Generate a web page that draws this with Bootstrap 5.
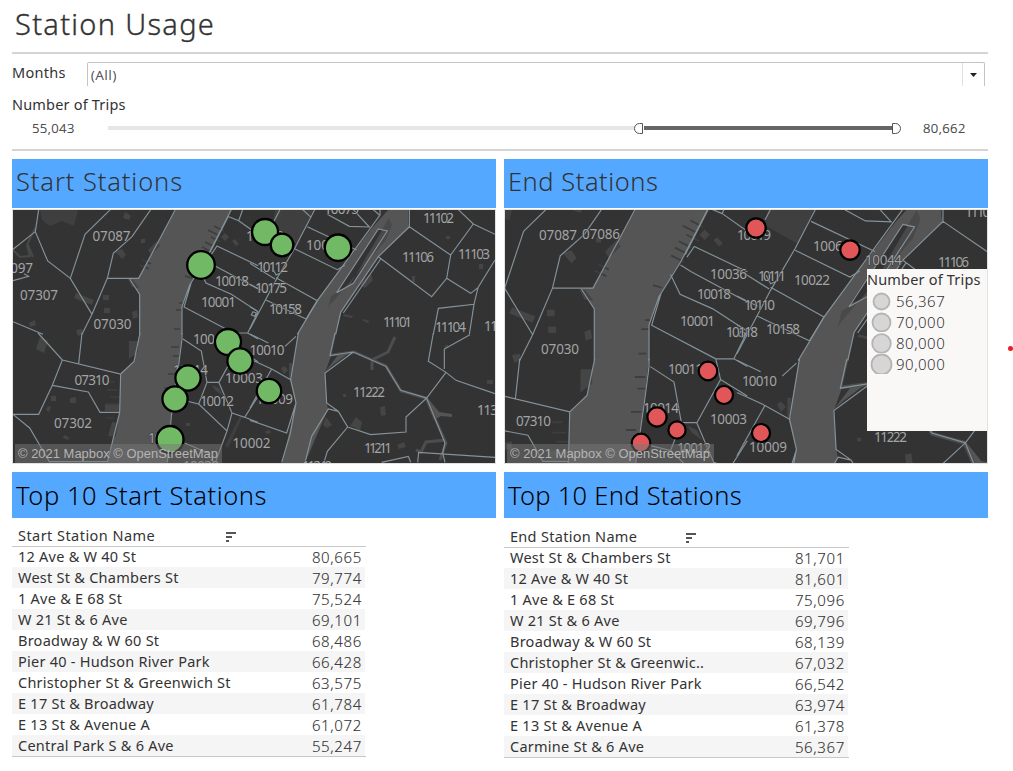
<!DOCTYPE html>
<html lang="en">
<head>
<meta charset="utf-8">
<title>Station Usage</title>
<link rel="stylesheet" href="https://cdn.jsdelivr.net/npm/bootstrap@5.3.0/dist/css/bootstrap.min.css">
<style>
body{font-family:"Noto Sans","Open Sans",sans-serif;color:#333;background:#fff;height:771px;overflow:hidden;font-size:14.5px}
.dash{width:976px;margin-left:12px;position:relative}
.title{height:52px;font-size:29px;font-weight:300;line-height:48px;padding-left:3px;letter-spacing:1.3px;-webkit-text-stroke:.35px #333}
.rule{height:2px;background:#d4d4d4}
.lbl{font-size:14.5px;line-height:20px;letter-spacing:.19px}
.months{height:34px;padding-top:8px}
.months .lbl{width:75px;letter-spacing:.3px}
.combo{width:898px;height:24px;border:1px solid #c4c4c4;border-bottom:0;border-radius:2px 2px 0 0;font-size:13.5px;font-weight:350;letter-spacing:.8px;-webkit-text-stroke:.2px #333}
.combo .arrow{width:22px;border-left:1px solid #e0e0e0}
.lite{font-weight:300;font-size:13px;letter-spacing:.45px;-webkit-text-stroke:.2px #333}
.lite span{position:relative;top:1px}
.lite .low{width:73px}
.banner{background:#55a8ff;height:49px;font-size:25.5px;font-weight:300;line-height:44px;padding-left:4px;letter-spacing:.88px}
.banner.end{letter-spacing:.52px}
.banner.top10{height:46px;color:#000;line-height:47px;letter-spacing:.57px}
.banner.top10.end{letter-spacing:.27px}
.mapbox{height:255px;margin-top:1px;margin-bottom:8px;border:1px solid #e2e2e2}
.mapbox svg{display:block}
.half{width:484px}
.legend{position:absolute;left:363px;top:110px;width:120px;height:162px;background:#f9f8f7}
.keyrow{height:21px;font-weight:300;font-size:15px;letter-spacing:.5px}
.keyrow span{padding-top:2px}
.rank{font-size:14.5px;line-height:21px;letter-spacing:.25px}
.rank .head{height:29px;border-bottom:1px solid #c8c8c8;padding-left:6px;line-height:35px}
.rank .item{height:21px;padding:0 4px 0 6px;line-height:21px;margin-right:1px}
.rank .item:nth-child(2){margin-top:-1px}
.rank .item:nth-child(odd){background:#f5f5f5}
.rank .item .num{font-weight:300;font-size:15px;position:relative;top:1px;color:#333;letter-spacing:.65px;margin-right:-1px;-webkit-text-stroke:.1px #333}
.rank .last{border-bottom:1px solid #c8c8c8}
.reddot{position:absolute;left:995.500px;top:346px;width:5px;height:5px;background:#ed1c24;border-radius:50%}
.zip{font:13.5px "Noto Sans",sans-serif;fill:#a2a4a6;stroke:#333;stroke-width:1px;paint-order:stroke}
.attr{font:13.4px "Liberation Sans",Arial,sans-serif;fill:#b4b4b4}
.edge path{fill:none;stroke:#84929a;stroke-width:1.15px;vector-effect:non-scaling-stroke}
</style>
</head>
<body>
<svg width="0" height="0" class="position-absolute">
<defs>
<g id="geo">
 <path fill="#3f3f3f" d="M40 210H78L74 226L62 221L50 226L42 220ZM275 210H313L297 244L272 230Z"/>
 <g fill="none" stroke="#484848"><path stroke-width="2" d="M35 228L27 245L30 256L20 257L13 250M28 245L33 257"/></g>
 <g fill="#555">
  <path d="M176 210L138 278L130 279L139.5 294V335L134 361L120.5 374L119.5 412L107 463H167L171 416L178.500 363L182 333V307L191 282L211 250L231 210Z"/>
  <path d="M388 210L372 228L317 300L298 334L290 380L296 403L282 463H305L328 409L327 404L325 373L331 356L336 334L341 312L378 257L409 228L406 210Z"/>
  <path d="M426 396L439 412L452 414V417L441 416L434 420L429 408Z"/>
  <path d="M325 372L338 355L354 351L345 356L333 365ZM408 210V222L403 210Z"/>
 </g>
 <path fill="#333" d="M378 229L388 231L353 284L337 291Z"/>
 <path fill="#494949" d="M389 218L392 225L386 240L330 305L328 309L331 296L350 285Z"/>
 <g fill="none" stroke="#4d4d4d" stroke-width="3"><path d="M331 355L354 352L386 366L401 391L426 398L446 443L440 460M372 370V360L388 352L395 337"/><path d="M446 440L426 442L421 452L416 450"/></g>
 <!-- buildings and parks -->
 <g fill="#454545">
  <path d="M115 251L122 249L126 255L122 259ZM128 279L133 280L139 288L132 287ZM76 293L94 300L92 305L74 298ZM103 295h6v5h-6ZM104 308h6v5h-6ZM29 323l6-3 1 5-6 2ZM76 330l6-1 1 5-5 2ZM132 312l5-2 1 7-5 2ZM125 212l6 4-2 4-6-2ZM141 239h4v4h-4ZM148 250l9-9 3 5-9 9ZM225 233l4 4-4 4-4-4ZM40 337l8 4-4 12-8-4ZM129 341h9v11l-9 7ZM51 396h5v5h-5ZM70 398l6-1v6h-6ZM48 406l3 1-2 5-3-2ZM105 404h15v7h-15ZM112 422l6 1-2 14-8-1ZM64 435l5 2-1 3-5-2Z"/>
  <path d="M363 280l8-6 2 6-8 8-5-3ZM344 314l9 2-1 2-9-2ZM363 319l6 2-1 2-6-3ZM412 276h3v6h-3ZM446 236h4v3h-4ZM479 264h4v5h-4ZM343 394h3v3h-3ZM380 407l5-1 1 9-5 1ZM397 445l7-3 2 5-7 2ZM323 425l3-8 6 8-5 3ZM350 426l6-9 6 5-2 9-6-4ZM445 345h3v3h-3ZM487 380h6v4h-6ZM265 431l5-1 1 3-5 1ZM264 387l3-2-1 6-3-2ZM289 363h3v15h-3ZM212 385l7 3 4 8-8-6ZM186 423h4v3h-4ZM235 239l4 5-3 2-4-5ZM281 368l3-2 4 4-4 4Z"/>
  <path d="M225 446L240 416L242 418L228 448Z" fill="#3f3f3f"/>
 </g>
 <g stroke="#3e3e3e" stroke-width="1.4"><path d="M208 230l10 5M211 237l10 5M205 242l10 5M202 247l10 5M199 253l10 5M214 226l10 5M185 276l7 2M179 303h5M176 310h6M174 329h6M171 347h8M173 356h6M168 374h8M164 388h8M140 265l9 4M143 260l8 4"/><path d="M115 382h-8M118 390h-11M120 397h-10M114 418h-8M119 404h-14"/></g>
 <g class="edge">
  <g transform="translate(8 205) scale(.33333)">
   <path d="M92 14L82 80L119 168L187 220L252 328L222 388M15 133L82 80M307 14L231 88L187 220M428 14L372 95L316 145L298 220L252 328M298 220H392L502 14M365 222L395 268V388M15 227L62 214L48 206M15 350L105 388"/>
   <path d="M670 14L595 160L545 240L522 305V388M662 32L606 142M663 35L692 47L704 14M692 47L750 88M610 148L627 123L750 182M595 166L620 182L750 252M572 188L594 234L670 268L750 320L719 384M550 232L528 306L677 384M735 320l10 4-5 10-10-4Z"/>
  </g>
  <g transform="translate(250 205) scale(.33333)">
   <path d="M194 14L135 128L78 225L0 372M90 14L65 62M158 14L184 38M172 65L320 135M135 132L262 194L285 180M232 28L298 64L358 66L310 14M370 14L388 30M0 175L75 222M0 238L48 262M78 218L202 287L168 342L48 285M0 305L22 318M68 190l10 20 18-8"/>
   <path d="M390 14V30L202 287L142 388M385 72L412 78L310 235L260 263ZM478 14V65L385 155L272 322L257 388M392 162L280 324M385 155L545 275L590 220L602 150L478 65M602 150L670 57L735 88M670 57L625 14M590 220L662 265L684 248L735 165M684 248L672 298L565 310L550 388M672 298L658 388"/>
  </g>
  <g transform="translate(8 333) scale(.33333)">
   <path d="M90 0L163 81L338 123L378 85L396 0M222 0L212 92M163 81L133 157L92 244H15M133 157L241 177L276 238H335M338 123L335 238L298 388M15 244L65 285L125 388M125 386H300"/>
   <path d="M522 0V18L512 95L490 250L478 388M525 18L580 54L597 148H633L688 48L677 0H719L750 18M597 148L572 213L500 195M572 213L657 294L672 240L633 149M688 48L750 86M672 240L710 253L750 190M710 253L750 268M657 294L622 388M530 330L600 360"/>
  </g>
  <g transform="translate(250 333) scale(.33333)">
   <path d="M145 0L122 140L138 210L120 305L95 388M138 10L105 40M0 3L55 30M0 78L65 108L122 140M65 108L0 225M0 262L110 300L138 210"/>
   <path d="M255 0L240 68L310 57L408 100L452 172L530 195L588 118L535 85L550 0M310 57L225 120L230 210L265 235L235 228L185 310L165 388M265 235L293 282L232 355L222 388M293 282L362 305L468 297V252L530 195L585 330L578 360L585 388M588 118L618 142L735 182M583 108V48L660 5M503 388L506 358L735 373M395 388L475 370L482 388"/>
  </g>
 </g>
</g>
</defs>
</svg>

<main class="dash">
 <h1 class="title m-0">Station Usage</h1>
 <div class="rule"></div>
 <div class="months d-flex">
  <div class="lbl">Months</div>
  <div class="combo d-flex justify-content-between"><span style="padding:2px 0 0 3px">(All)</span>
   <span class="arrow d-flex align-items-center justify-content-center"><svg width="7" height="4"><path d="M0 0H7L3.500 4Z" fill="#222"/></svg></span></div>
 </div>
 <div class="lbl" style="margin-top:6px">Number of Trips</div>
 <div class="d-flex align-items-center lite" style="height:28px;padding-left:20px">
  <span class="low">55,043</span>
  <svg class="flex-shrink-0" width="818" height="14" viewBox="105 121 818 14"><path d="M108 128H635" stroke="#e6e6e6" stroke-width="4"/><path d="M644 128H892" stroke="#666" stroke-width="4"/><g fill="#fff" stroke="#555"><path d="M642.500 123.500V133.500H639.500A5 5 0 0 1 639.500 123.500Z"/><path d="M892.500 123.500V133.500H895.500A5 5 0 0 0 895.500 123.500Z"/></g></svg>
  <span>80,662</span>
 </div>
 <div class="rule" style="margin-top:7px"></div>

 <div class="d-flex gap-2 pt-2">
  <section class="half">
   <div class="banner">Start Stations</div>
   <div class="mapbox">
    <svg width="482" height="253" viewBox="13 210 482 253">
     <rect x="13" y="210" width="482" height="253" fill="#333"/><use href="#geo"/>
     <g class="zip" id="zl"></g>
     <g fill="#72b966" stroke="#000" stroke-width="2.300"><circle cx="265" cy="232" r="13"/><circle cx="282" cy="245" r="11.300"/><circle cx="338" cy="247.700" r="13.200"/><circle cx="201" cy="265" r="13.800"/><circle cx="228" cy="342" r="13"/><circle cx="240" cy="361" r="12.600"/><circle cx="188" cy="378" r="12.600"/><circle cx="175" cy="399" r="12.600"/><circle cx="269" cy="391" r="12.200"/><circle cx="170" cy="439.500" r="13.500"/></g>
     <rect x="15" y="444" width="207" height="19" fill="#777" fill-opacity=".5"/><text class="attr" x="18" y="458" textLength="200" lengthAdjust="spacingAndGlyphs">© 2021 Mapbox © OpenStreetMap</text>
    </svg>
   </div>
   <div class="banner top10">Top 10 Start Stations</div>
   <div class="rank" style="width:354px" id="ra"></div>
  </section>
  <section class="half position-relative">
   <div class="banner end">End Stations</div>
   <div class="mapbox">
    <svg width="482" height="253" viewBox="505 210 482 253">
     <rect x="505" y="210" width="482" height="253" fill="#333"/><use href="#geo" transform="translate(413.700 -71.700) scale(1.293)"/>
     <g class="zip" id="zr"></g>
     <g fill="#e15759" stroke="#000" stroke-width="2.200"><circle cx="756" cy="228" r="9.700"/><circle cx="850" cy="250" r="9.700"/><circle cx="708" cy="371" r="9.300"/><circle cx="724" cy="395" r="9"/><circle cx="657" cy="417" r="9.600"/><circle cx="677" cy="430" r="8.600"/><circle cx="641" cy="443" r="9.300"/><circle cx="761" cy="433" r="9"/></g>
     <rect x="507" y="444" width="207" height="19" fill="#777" fill-opacity=".5"/><text class="attr" x="510" y="458" textLength="200" lengthAdjust="spacingAndGlyphs">© 2021 Mapbox © OpenStreetMap</text>
    </svg>
   </div>
   <div class="legend"><div class="lbl text-nowrap" style="line-height:21px">Number of Trips</div><div id="lg"></div></div>
   <div class="banner top10 end">Top 10 End Stations</div>
   <div class="rank" style="width:345px;padding-top:1px" id="rb"></div>
  </section>
 </div>
 <div class="reddot"></div>
</main>
<script>
const zips=(id,s)=>document.getElementById(id).innerHTML=s.split(' ').map(t=>{const[a,x,y,w]=t.split(',');return `<text x="${x}" y="${y}" textLength="${w||38}">${a}</text>`}).join('');
zips('zl','07087,92.5,240.5 07097,-5,272.5 07307,20,299.500 07030,93.5,329 07310,74.5,385,35 07302,54,428 10019,246,240.5 10075,324,214,35 10065,306,249.500 11102,423,223,31 11106,402,262,32 11103,458,259,32 10112,257,272,31 10018,215,286,34 10175,255,292.500,32 10001,201,307,35 10158,269,313.500,33 11101,383,326.500,29 11104,435,331.500,31 11378,484,331,33 10011,193,344,36 10010,249.5,354.500,35 10014,173,374.500,35 10003,225,383 10009,256,404,37 10012,200,405.500,34 11222,353,397,32 11373,477,414.500,34 10002,232.500,447.500,38 10013,148,443,34 11211,364,452.500,28 10038,183,471,36 11249,302,471,30');
zips('zr','07087,539,239.500 07086,582,238.500 10019,737,239.500,34 10065,813,251,37 11102,965,217,31 10044,865,264.500,37 11106,938,267,31 10036,710,278.500,37 10111,758,281,28 10022,794,284.500,36 10018,697,298.500,34 10110,744,309.500,31 10001,680,326,35 10118,726,337,32 10158,766,334,34 07030,541,354 07310,516,426,35 10011,668,374,35 10010,742,386,35 10014,643,413,36 10003,710,424,37 10012,677,452.500,34 10009,749,451.500,38 11222,874,441.500,33');
const rank=(id,head,ls,x,rows)=>document.getElementById(id).innerHTML=`<div class="head d-flex"><span style="letter-spacing:${ls}px">${head}</span><svg style="margin-left:${x}px;margin-top:14px" width="12" height="11"><path d="M0 1H10M0 5H6M0 9H3" stroke="#555" stroke-width="2"/></svg></div>`+rows.split('|').map(r=>{const[n,v]=r.split('=');return `<div class="item d-flex justify-content-between"><span>${n}</span><span class="num">${v}</span></div>`}).join('')+'<div class="last"></div>';
rank('ra','Start Station Name',.45,71,'12 Ave &amp; W 40 St=80,665|West St &amp; Chambers St=79,774|1 Ave &amp; E 68 St=75,524|W 21 St &amp; 6 Ave=69,101|Broadway &amp; W 60 St=68,486|Pier 40 - Hudson River Park=66,428|Christopher St &amp; Greenwich St=63,575|E 17 St &amp; Broadway=61,784|E 13 St &amp; Avenue A=61,072|Central Park S &amp; 6 Ave=55,247');
rank('rb','End Station Name',.3,49,'West St &amp; Chambers St=81,701|12 Ave &amp; W 40 St=81,601|1 Ave &amp; E 68 St=75,096|W 21 St &amp; 6 Ave=69,796|Broadway &amp; W 60 St=68,139|Christopher St &amp; Greenwic..=67,032|Pier 40 - Hudson River Park=66,542|E 17 St &amp; Broadway=63,974|E 13 St &amp; Avenue A=61,378|Carmine St &amp; 6 Ave=56,367');
document.getElementById('lg').innerHTML=[['56,367',8],['70,000',9],['80,000',9.3],['90,000',10]].map(([t,r])=>`<div class="d-flex align-items-center keyrow"><svg width="29" height="21"><circle cx="14.500" cy="11.500" r="${r}" fill="#d6d6d6" stroke="#b4b4b4" stroke-width="1.800"/></svg><span>${t}</span></div>`).join('');
</script>
<script src="https://cdn.jsdelivr.net/npm/bootstrap@5.3.0/dist/js/bootstrap.bundle.min.js"></script>
</body>
</html>
